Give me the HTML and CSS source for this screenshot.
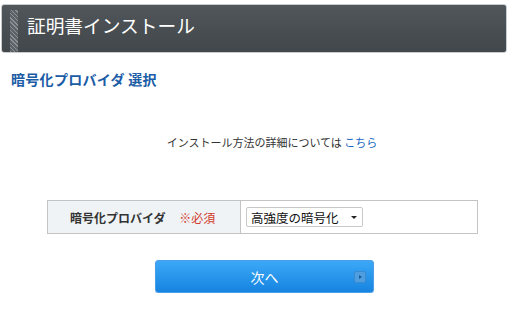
FILE: index.html
```html
<!DOCTYPE html>
<html lang="ja">
<head>
  <meta charset="UTF-8">
  <title>証明書インストール</title>
  <link rel="stylesheet" href="styles.css">
</head>
<body>
  <div class="page">
    <div class="header">
      <span class="header-bar"></span>
      <h1>証明書インストール</h1>
    </div>

    <h2 class="section-title">暗号化プロバイダ 選択</h2>

    <p class="note">インストール方法の詳細については <a href="#">こちら</a></p>

    <table class="form-table">
      <tr>
        <th>暗号化プロバイダ <span class="required">※必須</span></th>
        <td>
          <div class="select">
            <span>高強度の暗号化</span>
            <span class="arrow"></span>
          </div>
        </td>
      </tr>
    </table>

    <div class="actions">
      <button class="next-btn">次へ<span class="btn-icon"></span></button>
    </div>
  </div>
</body>
</html>
```

FILE: styles.css
```css
body {
  margin: 0;
  padding: 0;
  background-color: #fff;
  font-family: "Noto Sans CJK JP", sans-serif;
  color: #333;
}

.page {
  width: 516px;
  padding-top: 4px;
}

/* dark title band */
.header {
  margin-left: 1px;
  width: 504px;
  height: 47px;
  border: 1px solid #c9ccce;
  border-radius: 3px;
  background: linear-gradient(#50565a, #41474a);
  display: flex;
  align-items: flex-start;
  box-sizing: content-box;
}

.header-bar {
  width: 8px;
  height: 42px;
  margin: 5px 0 0 8px;
  background: repeating-linear-gradient(45deg, #8a9096 0 1px, #5c6267 1px 3px);
}

.header h1 {
  margin: 3px 0 0 9px;
  font-size: 18.7px;
  font-weight: normal;
  color: #fff;
  line-height: 34px;
}

.section-title {
  margin: 17px 0 0 11px;
  font-size: 14px;
  letter-spacing: 0.3px;
  font-weight: bold;
  color: #1b5ca6;
  line-height: 18px;
}

.note {
  margin: 46px 0 0 0;
  text-align: center;
  font-size: 11px;
  line-height: 16px;
  color: #333;
  padding-left: 28px;
}

.note a {
  color: #1a66c2;
  text-decoration: none;
}

.form-table {
  margin: 50px 0 0 47px;
  width: 431px;
  height: 34px;
  border-collapse: collapse;
  font-size: 12px;
}

.form-table th,
.form-table td {
  border: 1px solid #c4c4c4;
  padding: 0;
}

.form-table th {
  width: 193px;
  background-color: #eff3f6;
  font-weight: bold;
  color: #333;
  text-align: left;
  padding-left: 22px;
  box-sizing: border-box;
}

.required {
  margin-left: 11px;
  font-weight: normal;
  color: #d23a2a;
}

.form-table td {
  padding-left: 5px;
}

.select {
  width: 117px;
  height: 20px;
  border: 1px solid #c8c8c8;
  border-radius: 2px;
  display: flex;
  align-items: center;
  justify-content: space-between;
  font-size: 12.5px;
  color: #111;
  padding: 0 5px 0 4px;
  box-sizing: border-box;
}

.arrow {
  width: 0;
  height: 0;
  border-left: 3px solid transparent;
  border-right: 3px solid transparent;
  border-top: 3px solid #222;
}

.actions {
  display: flex;
  margin-top: 26px;
  padding-left: 155px;
}

.next-btn {
  position: relative;
  width: 219px;
  height: 33px;
  border: 1px solid #4b9ee8;
  border-radius: 3px;
  background: linear-gradient(#3ca8f7, #1684e0);
  color: #fff;
  font-family: "Noto Sans CJK JP", sans-serif;
  font-size: 14px;
  cursor: pointer;
  box-shadow: 0 1px 1px rgba(0, 0, 0, 0.15);
}

.btn-icon {
  position: absolute;
  right: 7px;
  top: 10px;
  width: 10px;
  height: 10px;
  border-radius: 2px;
  background-color: #4f9ee0;
  border: 1px solid #3b8ad2;
}

.btn-icon::after {
  content: "";
  position: absolute;
  left: 4px;
  top: 3px;
  border-top: 2px solid transparent;
  border-bottom: 2px solid transparent;
  border-left: 3px solid #1c5a96;
}
```
